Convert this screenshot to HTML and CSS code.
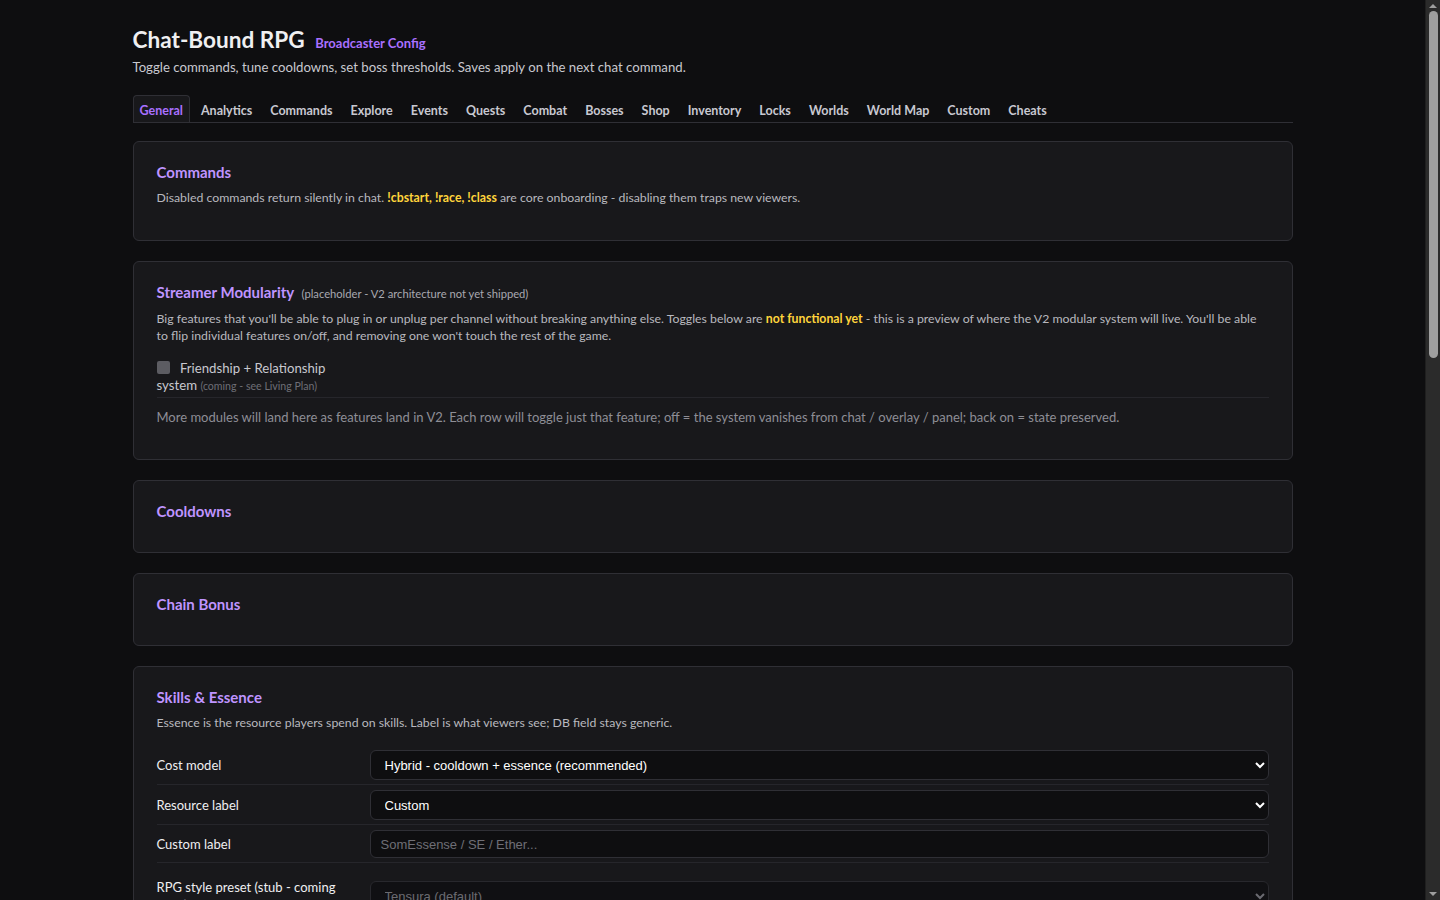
FILE: index.html
```html
<!DOCTYPE html>
<html lang="en">
<head>
  <meta charset="UTF-8">
  <title>Chat-Bound RPG - Broadcaster Config</title>
  <link rel="stylesheet" href="styles.css">
</head>
<body>

  <div class="wrap">
    <header class="top">
      <h1>Chat-Bound RPG <span class="sub">Broadcaster Config</span></h1>
      <p class="lead">Toggle commands, tune cooldowns, set boss thresholds. Saves apply on the next chat command.</p>
    </header>

    <nav class="tabs">
      <a class="tab active">General</a>
      <a class="tab">Analytics</a>
      <a class="tab">Commands</a>
      <a class="tab">Explore</a>
      <a class="tab">Events</a>
      <a class="tab">Quests</a>
      <a class="tab">Combat</a>
      <a class="tab">Bosses</a>
      <a class="tab">Shop</a>
      <a class="tab">Inventory</a>
      <a class="tab">Locks</a>
      <a class="tab">Worlds</a>
      <a class="tab">World Map</a>
      <a class="tab">Custom</a>
      <a class="tab">Cheats</a>
    </nav>

    <section class="card">
      <h2>Commands</h2>
      <p class="desc">Disabled commands return silently in chat. <b class="warn">!cbstart, !race, !class</b> are core onboarding - disabling them traps new viewers.</p>
    </section>

    <section class="card">
      <h2>Streamer Modularity <span class="note">(placeholder - V2 architecture not yet shipped)</span></h2>
      <p class="desc">Big features that you'll be able to plug in or unplug per channel without breaking anything else. Toggles below are <b class="warn">not functional yet</b> - this is a preview of where the V2 modular system will live. You'll be able to flip individual features on/off, and removing one won't touch the rest of the game.</p>
      <div class="module">
        <label class="module-label">
          <input type="checkbox" disabled>
          Friendship + Relationship system <span class="hint">(coming - see Living Plan)</span>
        </label>
      </div>
      <p class="more">More modules will land here as features land in V2. Each row will toggle just that feature; off = the system vanishes from chat / overlay / panel; back on = state preserved.</p>
    </section>

    <section class="card">
      <h2>Cooldowns</h2>
    </section>

    <section class="card">
      <h2>Chain Bonus</h2>
    </section>

    <section class="card">
      <h2>Skills &amp; Essence</h2>
      <p class="desc">Essence is the resource players spend on skills. Label is what viewers see; DB field stays generic.</p>

      <div class="fields">
        <div class="row">
          <label>Cost model</label>
          <select>
            <option>Hybrid - cooldown + essence (recommended)</option>
            <option>Cooldown only</option>
            <option>Essence only</option>
          </select>
        </div>
        <div class="row">
          <label>Resource label</label>
          <select>
            <option>Custom</option>
            <option>Mana</option>
            <option>Essence</option>
          </select>
        </div>
        <div class="row">
          <label>Custom label</label>
          <input type="text" placeholder="SomEssense / SE / Ether...">
        </div>
        <div class="row spaced">
          <label>RPG style preset (stub - coming soon)</label>
          <select disabled>
            <option>Tensura (default)</option>
          </select>
        </div>
        <div class="row">
          <label>Essence regen per minute</label>
          <input type="text" value="5">
        </div>
        <div class="row">
          <label>Max essence</label>
          <input type="text" value="100">
        </div>
        <div class="row">
          <label>Starting essence</label>
          <input type="text" value="50">
        </div>
      </div>
    </section>

    <section class="card">
      <h2>Leveling</h2>
      <p class="desc">XP curve and level cap. Changes only affect XP earned after saving.</p>
      <div class="fields">
        <div class="row">
          <label>XP curve</label>
          <select><option>Standard</option></select>
        </div>
        <div class="row">
          <label>Level cap</label>
          <input type="text" value="100">
        </div>
        <div class="row">
          <label>XP per chat message</label>
          <input type="text" value="2">
        </div>
      </div>
    </section>

    <section class="card">
      <h2>Economy</h2>
      <p class="desc">Gold payouts and shop pricing multipliers.</p>
      <div class="fields">
        <div class="row">
          <label>Gold multiplier</label>
          <input type="text" value="1.0">
        </div>
        <div class="row">
          <label>Shop price multiplier</label>
          <input type="text" value="1.0">
        </div>
        <div class="row">
          <label>Daily bonus</label>
          <input type="text" value="25">
        </div>
      </div>
    </section>

    <section class="card">
      <h2>Deaths &amp; Penalties</h2>
      <p class="desc">What happens when a viewer's character falls in combat.</p>
      <div class="fields">
        <div class="row">
          <label>Death penalty</label>
          <select><option>Lose 10% gold</option></select>
        </div>
        <div class="row">
          <label>Respawn delay (seconds)</label>
          <input type="text" value="60">
        </div>
      </div>
    </section>

    <section class="card">
      <h2>Chat Output</h2>
      <p class="desc">How verbose the bot is in chat.</p>
      <div class="fields">
        <div class="row">
          <label>Reply style</label>
          <select><option>Compact</option></select>
        </div>
        <div class="row">
          <label>Whisper long replies</label>
          <select><option>Off</option></select>
        </div>
      </div>
    </section>

    <div class="actions">
      <button class="save">Save</button>
    </div>
  </div>

  <!-- window scrollbar, drawn since the headless shot hides it -->
  <div class="scrollbar">
    <span class="arrow up"></span>
    <span class="thumb"></span>
    <span class="arrow down"></span>
  </div>

</body>
</html>
```

FILE: styles.css
```css
:root {
  color-scheme: dark;
  --bg: #0e0e10;
  --card: #18181b;
  --line: #2f2f35;
  --soft-line: #26262b;
  --text: #efeff1;
  --muted: #b8b8bf;
  --dim: #8e8e96;
  --purple: #bf94ff;
  --purple-2: #a970ff;
  --yellow: #ffd43b;
}

body {
  background-color: var(--bg);
  color: var(--text);
  font-family: Lato, "Noto Sans", sans-serif;
  font-size: 13px;
  margin: 0;
  padding: 26px 15px 40px 0;
}

.wrap {
  max-width: 1160px;
  margin: 0 auto;
}

h1 {
  font-size: 22.6px;
  font-weight: 700;
  margin: 0;
  line-height: 28px;
}

h1 .sub {
  font-size: 13px;
  font-weight: 700;
  color: var(--purple-2);
  margin-left: 5px;
}

.lead {
  margin: 2px 0 0;
  font-size: 13.2px;
  color: #c8c8cf;
}

.tabs {
  display: flex;
  gap: 4px;
  margin-top: 20px;
  border-bottom: 1px solid var(--line);
}

.tab {
  padding: 7px 6px 4px;
  font-size: 12.5px;
  font-weight: 700;
  color: #c8c8d0;
  border: 1px solid transparent;
  border-bottom: none;
  border-radius: 4px 4px 0 0;
  cursor: pointer;
}

.tab.active {
  color: var(--purple-2);
  background-color: var(--card);
  border-color: var(--line);
}

.card {
  background-color: var(--card);
  border: 1px solid var(--line);
  border-radius: 6px;
  padding: 22px 23px 24px;
  margin-top: 18px;
}

.card + .card {
  margin-top: 20px;
}

h2 {
  font-size: 15px;
  font-weight: 700;
  color: var(--purple);
  margin: 0 0 8px;
  line-height: 17px;
}

h2 .note {
  font-size: 11.2px;
  font-weight: 400;
  color: #a8a8b0;
  margin-left: 4px;
}

.desc {
  margin: 0 0 10px;
  font-size: 12.3px;
  line-height: 17px;
  color: var(--muted);
}

.warn {
  color: var(--yellow);
}

.module {
  padding: 6px 0 2px;
  border-bottom: 1px solid var(--soft-line);
}

.module-label {
  display: block;
  width: 180px;
  line-height: 17px;
  color: #c8c8cf;
  font-size: 13.2px;
}

.module-label input {
  appearance: none;
  margin: 0 7px 0 0;
  width: 13px;
  height: 13px;
  border-radius: 2px;
  background-color: #5c5c62;
  vertical-align: -1px;
}

.hint {
  font-size: 10.6px;
  color: #6e6e76;
  white-space: nowrap;
}

.more {
  margin: 11px 0 10px;
  color: var(--dim);
}

.fields {
  margin-top: 14px;
}

.row {
  display: grid;
  grid-template-columns: 213px 1fr;
  align-items: center;
  padding: 5px 0 4px;
  border-bottom: 1px solid var(--soft-line);
}

.row.spaced {
  margin-top: 10px;
}

.row label {
  line-height: 18px;
  color: var(--text);
  padding-right: 20px;
}

.row select,
.row input {
  font-family: "Liberation Sans", Arial, sans-serif;
  font-size: 13px;
  height: 30px;
  background-color: var(--bg);
  color: #ffffff;
  border: 1px solid var(--line);
  border-radius: 6px;
  padding: 0 10px;
  box-sizing: border-box;
  width: 100%;
}

.row input {
  height: 28px;
}

.row input::placeholder {
  color: #6e6e76;
}

.row select:disabled {
  color: #8e8e96;
}

.actions {
  margin-top: 24px;
  text-align: right;
}

.save {
  background-color: #9147ff;
  border: none;
  color: white;
  padding: 8px 20px;
  border-radius: 6px;
  font-family: inherit;
  font-weight: 700;
  cursor: pointer;
}

.scrollbar {
  position: fixed;
  top: 0;
  right: 0;
  bottom: 0;
  width: 15px;
  background-color: #2b2b2b;
  border-left: 1px solid #1f1f1f;
  box-sizing: border-box;
}

.scrollbar .thumb {
  position: absolute;
  top: 11px;
  left: 3px;
  width: 9px;
  height: 347px;
  border-radius: 5px;
  background-color: #9f9f9f;
}

.scrollbar .arrow {
  position: absolute;
  left: 3px;
  width: 0;
  height: 0;
  border-left: 4px solid transparent;
  border-right: 4px solid transparent;
}

.scrollbar .up {
  top: 4px;
  border-bottom: 4px solid #9f9f9f;
}

.scrollbar .down {
  bottom: 4px;
  border-top: 4px solid #9f9f9f;
}
```
